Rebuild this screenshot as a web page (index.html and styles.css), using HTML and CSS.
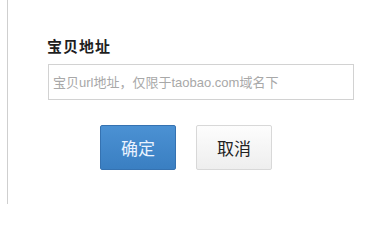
FILE: index.html
```html
<!DOCTYPE html>
<html lang="zh-CN">
<head>
<meta charset="utf-8">
<title>宝贝地址</title>
<link rel="stylesheet" href="styles.css">
</head>
<body>
<div class="panel">
  <div class="form">
    <div class="label">宝贝地址</div>
    <input class="field" type="text" placeholder="宝贝url地址，仅限于taobao.com域名下">
    <div class="actions">
      <button class="btn btn-primary">确定</button>
      <button class="btn btn-default">取消</button>
    </div>
  </div>
</div>
</body>
</html>
```

FILE: styles.css
```css
html, body {
  margin: 0;
  padding: 0;
  background: #fff;
}
body {
  font-family: "Liberation Sans", "Noto Sans CJK SC", sans-serif;
  width: 376px;
  height: 204px;
  overflow: hidden;
}
.panel {
  margin-left: 7px;
  border-left: 1px solid #cfcfcf;
  height: 204px;
  box-sizing: border-box;
  padding: 38px 0 0 39px;
}
.form {
  display: flex;
  flex-direction: column;
  align-items: flex-start;
}
.label {
  font-family: "Noto Sans CJK SC", sans-serif;
  font-size: 15px;
  font-weight: bold;
  line-height: 16px;
  letter-spacing: 1px;
  color: #1e1e1e;
}
.field {
  margin: 10px 0 0 1px;
  width: 306px;
  height: 36px;
  box-sizing: border-box;
  border: 1px solid #d2d2d2;
  padding: 0 0 0 4px;
  font-family: "Liberation Sans", "Noto Sans CJK SC", sans-serif;
  font-size: 13px;
  color: #333;
  outline: none;
}
.field::placeholder {
  color: #a8a8a8;
}
.actions {
  display: flex;
  gap: 20px;
  margin: 25px 0 0 53px;
}
.btn {
  width: 76px;
  height: 45px;
  box-sizing: border-box;
  border-radius: 2px;
  font-family: "Noto Sans CJK SC", sans-serif;
  font-size: 17px;
  padding: 0;
  cursor: pointer;
}
.btn-primary {
  background: linear-gradient(#4b91d3, #3a7fc2);
  border: 1px solid #3572b1;
  color: #eaf3ff;
}
.btn-default {
  background: linear-gradient(#fdfdfd, #eeeeee);
  border: 1px solid #d8d8d8;
  color: #222;
}
```
